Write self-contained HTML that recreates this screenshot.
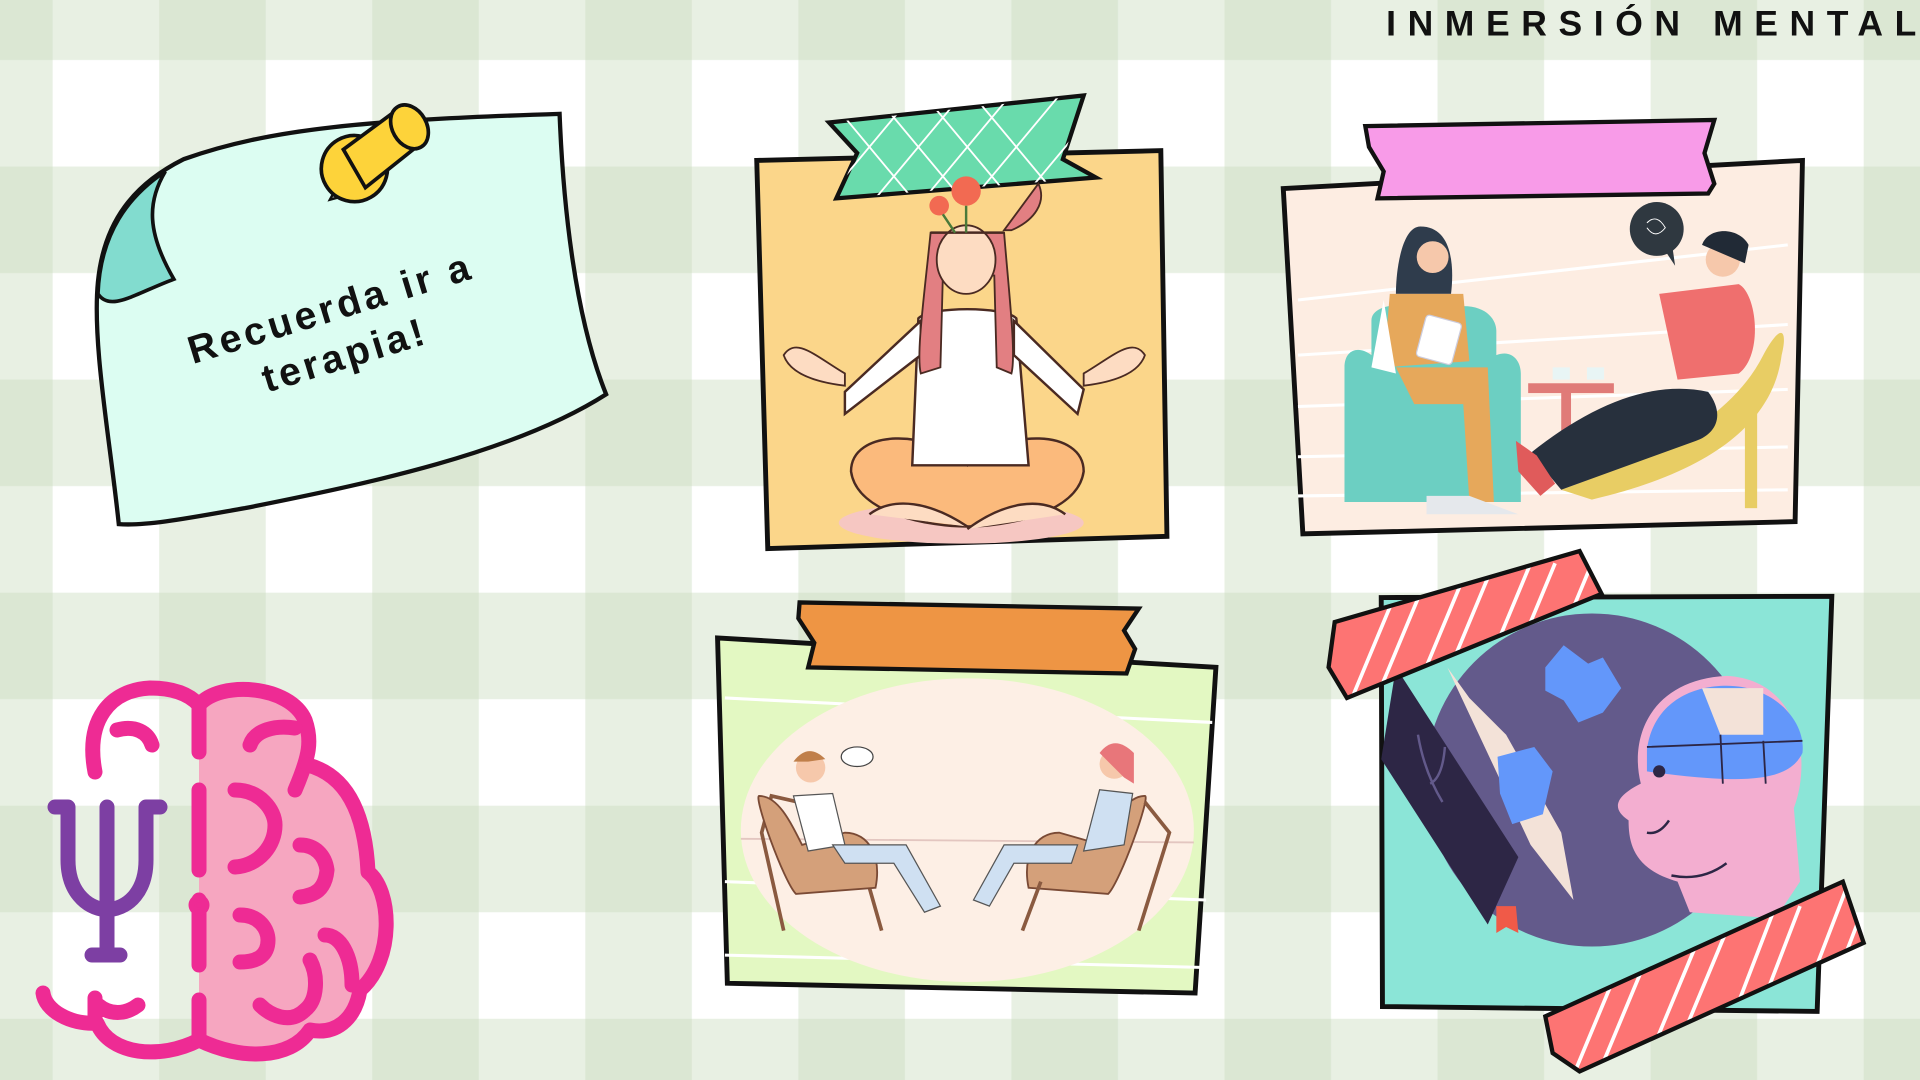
<!DOCTYPE html>
<html><head><meta charset="utf-8"><style>
html,body{margin:0;padding:0;width:1920px;height:1080px;overflow:hidden;background:#fff}
svg{display:block}
</style></head><body>
<svg width="1920" height="1080" viewBox="0 0 1568 882" preserveAspectRatio="none" xmlns="http://www.w3.org/2000/svg">
<defs>
<pattern id="g" x="-44" y="-38" width="174" height="174" patternUnits="userSpaceOnUse">
<rect width="174" height="174" fill="#fff"/>
<rect x="0" y="0" width="87" height="174" fill="#c9dcbd" fill-opacity="0.42"/>
<rect x="0" y="0" width="174" height="87" fill="#c9dcbd" fill-opacity="0.42"/>
</pattern>
<clipPath id="t1"><path d="M677,100 L885,78 L868,130 L895,145 L683,162 L700,125Z"/></clipPath>
<clipPath id="ct"><path d="M1090,508 L1290,450 L1308,485 L1100,570 L1085,545Z"/></clipPath>
<clipPath id="cb"><path d="M1262,830 L1505,720 L1522,770 L1290,875 L1268,860Z"/></clipPath>
</defs>
<rect width="1568" height="882" fill="url(#g)"/>

<text x="1132" y="29" font-family="Liberation Sans, sans-serif" font-weight="bold" font-size="29" textLength="433" lengthAdjust="spacing" fill="#111">INMERSIÓN MENTAL</text>

<!-- sticky note -->
<path d="M97,428 C90,360 75,280 80,230 C85,180 110,150 150,130 C220,105 300,98 457,93 C460,170 470,260 495,322 C420,370 300,395 200,415 C160,422 120,430 97,428Z" fill="#dcfdf2" stroke="#111" stroke-width="3.5"/>
<path d="M80,240 C82,190 105,160 135,140 C120,165 120,190 142,228 C110,240 90,255 80,240Z" fill="#82dccf" stroke="#111" stroke-width="3"/>
<g transform="translate(300,120) rotate(-30)">
<path d="M-48,22 L-38,16 L-33,26Z" fill="#ddd" stroke="#111" stroke-width="2"/>
<circle cx="-18" cy="10" r="27" fill="#fdd33a" stroke="#111" stroke-width="3"/>
<path d="M-18,-8 L35,-14 L35,20 L-18,28Z" fill="#fdd33a" stroke="#111" stroke-width="3"/>
<ellipse cx="38" cy="3" rx="14" ry="19" fill="#fdd33a" stroke="#111" stroke-width="3"/>
</g>
<g transform="translate(273,262) rotate(-17)" font-family="Liberation Sans, sans-serif" font-weight="bold" font-size="32" fill="#111" text-anchor="middle" letter-spacing="3">
<text x="0" y="0">Recuerda ir a</text><text x="0" y="40">terapia!</text></g>

<!-- yoga frame -->
<path d="M618,131 L948,123 L953,438 L627,448Z" fill="#fbd68a" stroke="#111" stroke-width="4"/>
<path d="M677,100 L885,78 L868,130 L895,145 L683,162 L700,125Z" fill="#69dbac" stroke="#111" stroke-width="3.5"/>
<g clip-path="url(#t1)" stroke="#fff" stroke-width="1.5" fill="none">
<path d="M660,180 L760,60 M700,180 L800,60 M740,180 L840,60 M780,180 L880,60 M820,180 L920,60 M700,60 L800,180 M740,60 L840,180 M780,60 L880,180 M660,60 L760,180"/></g>
<ellipse cx="785" cy="427" rx="100" ry="17" fill="#f6c7c2"/>
<path d="M695,385 C695,350 760,350 790,380 C820,350 885,350 885,385 C880,420 820,430 790,430 C760,430 700,420 695,385Z" fill="#fbba7c" stroke="#4a2a22" stroke-width="2"/>
<path d="M750,260 C760,250 820,250 830,260 L840,380 L745,380Z" fill="#fff" stroke="#4a2a22" stroke-width="2"/>
<path d="M752,262 L690,320 L690,338 L752,290Z M828,262 L885,318 L880,338 L828,290Z" fill="#fff" stroke="#4a2a22" stroke-width="2"/>
<path d="M760,190 C755,240 748,290 752,305 L768,300 L770,225 L812,225 L814,300 L826,305 C830,290 824,240 820,190Z" fill="#e27f82" stroke="#4a2a22" stroke-width="1.5"/>
<ellipse cx="789" cy="212" rx="24" ry="28" fill="#fddcc2" stroke="#4a2a22" stroke-width="1.5"/>
<path d="M760,190 L820,190" stroke="#4a2a22" stroke-width="2"/>
<path d="M820,188 L848,150 C855,165 845,180 826,188Z" fill="#e27f82" stroke="#4a2a22" stroke-width="1.5"/>
<circle cx="789" cy="156" r="12" fill="#f26a52"/><circle cx="767" cy="168" r="8" fill="#f26a52"/>
<path d="M789,168 L789,190 M770,175 L780,190" stroke="#4a7a3a" stroke-width="2"/>
<path d="M640,290 C650,275 665,290 690,305 L690,315 C665,312 645,305 640,290Z M935,290 C925,275 910,290 885,305 L885,315 C910,312 930,305 935,290Z" fill="#fddcc2" stroke="#4a2a22" stroke-width="1.5"/>
<path d="M710,420 C730,405 760,410 790,430 M870,420 C850,405 820,410 790,432" stroke="#4a2a22" stroke-width="2" fill="#fddcc2"/>

<!-- therapy frame -->
<path d="M1048,154 L1472,131 L1466,426 L1064,436Z" fill="#fdede2" stroke="#111" stroke-width="4"/>
<g stroke="#fff" stroke-width="2.5"><path d="M1060,245 L1460,200 M1060,290 L1460,265 M1060,332 L1460,318 M1060,373 L1460,365 M1060,405 L1460,400"/></g>
<path d="M1115,103 L1400,98 L1392,125 L1400,150 L1395,158 L1125,162 L1130,140 L1118,120Z" fill="#f89be8" stroke="#111" stroke-width="3.5"/>
<path d="M1098,410 L1098,300 C1098,285 1110,282 1120,290 L1120,262 C1120,250 1140,248 1150,250 L1195,250 C1215,250 1222,262 1222,270 L1222,290 C1235,285 1242,295 1242,305 L1242,410Z" fill="#6ccfc2"/>
<path d="M1160,185 C1145,185 1140,220 1140,240 L1185,240 C1188,215 1185,185 1160,185Z" fill="#2f3c4c"/>
<circle cx="1170" cy="210" r="13" fill="#f6c8ab"/>
<path d="M1135,240 L1195,240 L1200,295 L1130,300Z" fill="#e6a85b"/>
<path d="M1130,245 L1120,300 L1140,305 Z" fill="#fff"/>
<path d="M1140,300 L1215,300 L1220,410 L1200,410 L1195,330 L1155,330Z" fill="#e6a85b"/>
<rect x="1160" y="260" width="30" height="35" rx="3" fill="#fff" stroke="#ccd" transform="rotate(15 1175 278)"/>
<path d="M1165,405 L1200,405 L1240,420 L1165,420Z" fill="#e5e8ec"/>
<rect x="1248" y="313" width="70" height="8" fill="#e07b78"/><rect x="1275" y="320" width="8" height="40" fill="#e07b78"/>
<path d="M1268,300 h14 v10 h-14z M1296,300 h14 v10 h-14z" fill="#e8f5f5"/>
<path d="M1275,400 C1330,380 1410,350 1440,290 C1455,262 1460,270 1455,290 C1450,330 1420,380 1300,408Z" fill="#e8cd64"/>
<rect x="1425" y="330" width="10" height="85" fill="#e8cd64"/>
<path d="M1355,240 L1420,232 C1435,240 1440,290 1420,305 L1370,310Z" fill="#ef6f6e"/>
<path d="M1250,370 C1300,330 1350,310 1395,320 C1410,340 1400,355 1385,360 L1275,400Z" fill="#27303d"/>
<path d="M1238,360 L1255,372 L1270,395 L1258,405 L1240,385Z" fill="#e05b5b"/>
<circle cx="1407" cy="212" r="14" fill="#f6c8ab"/>
<path d="M1390,200 C1395,185 1420,185 1428,200 L1425,215 Z" fill="#212a36"/>
<circle cx="1353" cy="187" r="22" fill="#2f3840"/><path d="M1360,205 l8,12 l-2,-14z" fill="#2f3840"/>
<path d="M1345,182 q8,-8 15,4 q-8,10 -15,0" stroke="#fff" stroke-width="0.8" fill="none"/>

<!-- lower middle frame -->
<path d="M586,521 L993,545 L976,811 L594,803Z" fill="#e3f8c2" stroke="#111" stroke-width="4"/>
<g stroke="#fff" stroke-width="2.5"><path d="M592,570 L990,590 M592,720 L985,735 M592,780 L980,790"/></g>
<ellipse cx="790" cy="678" rx="185" ry="124" fill="#fdefe5"/>
<path d="M605,685 L975,688" stroke="#e3c6c0" stroke-width="1.5"/>
<path d="M652,655 L630,650 L622,680 L640,760 M700,690 L720,760" stroke="#8a5a40" stroke-width="3" fill="none"/>
<path d="M620,650 C615,650 640,720 650,730 L715,725 C720,700 710,680 690,680 L655,690 C645,670 635,650 620,650Z" fill="#d4a07a" stroke="#7a4a35" stroke-width="1.5"/>
<path d="M648,650 L680,648 L690,690 L660,695Z" fill="#fff" stroke="#555" stroke-width="1"/>
<circle cx="662" cy="627" r="12" fill="#f6c8ab"/><path d="M648,622 q12,-16 26,-2 l-14,2z" fill="#c07f4a"/>
<path d="M680,690 L740,690 L768,740 L755,745 L730,705 L690,705Z" fill="#cfe0f2" stroke="#555" stroke-width="1"/>
<ellipse cx="700" cy="618" rx="13" ry="8" fill="#fff" stroke="#444" stroke-width="1"/>
<path d="M935,650 C940,650 915,720 905,730 L840,725 C835,700 845,680 865,680 L900,690 C910,670 920,650 935,650Z" fill="#d4a07a" stroke="#7a4a35" stroke-width="1.5"/>
<path d="M935,655 L955,680 L930,760 M850,720 L835,760" stroke="#8a5a40" stroke-width="3" fill="none"/>
<path d="M898,645 L925,648 L918,690 L885,695Z" fill="#cfe0f2" stroke="#555" stroke-width="1"/>
<circle cx="910" cy="624" r="12" fill="#f6c8ab"/><path d="M898,615 q12,-16 28,0 l0,25 l-8,-5z" fill="#e8767a"/>
<path d="M880,690 L820,690 L795,735 L808,740 L828,705 L875,705Z" fill="#cfe0f2" stroke="#555" stroke-width="1"/>
<path d="M653,492 L930,497 L918,515 L927,530 L920,550 L660,545 L665,525 L652,505Z" fill="#ee9544" stroke="#111" stroke-width="3.5"/>

<!-- lower right frame -->
<path d="M1128,488 L1496,487 L1484,826 L1129,822Z" fill="#8be5d7" stroke="#111" stroke-width="4"/>
<circle cx="1300" cy="637" r="136" fill="#635a8b"/>
<path d="M1182,545 L1250,690 L1285,735 L1275,680 L1230,600 L1200,570 Z" fill="#f3e2d8"/>
<path d="M1140,545 L1128,620 L1215,755 L1240,700 Z" fill="#2d2645"/>
<path d="M1158,600 q5,30 20,55 M1168,640 q10,-5 12,-30" stroke="#635a8b" stroke-width="2" fill="none"/>
<path d="M1222,740 L1238,740 L1240,762 L1230,757 L1222,762Z" fill="#f05a48"/>
<path d="M1262,545 l15,-18 l20,15 l12,-5 l15,25 l-15,20 l-20,8 l-12,-18 l-15,-8z" fill="#6397fa"/>
<path d="M1223,618 l30,-8 l15,20 l-8,35 l-25,8 l-10,-25z" fill="#6397fa"/>
<path d="M1340,640 C1330,600 1350,555 1410,552 C1470,555 1480,620 1465,660 L1470,720 L1450,750 L1380,745 L1370,720 C1335,710 1330,690 1330,670 C1315,660 1320,650 1340,640Z" fill="#f3aed0"/>
<path d="M1345,612 C1350,575 1380,560 1410,560 C1450,560 1475,590 1472,615 C1460,640 1420,640 1345,630Z" fill="#6397fa"/>
<path d="M1390,562 L1440,562 L1440,600 L1405,600 Z" fill="#f3e2d8"/>
<path d="M1345,610 L1472,605 M1405,600 L1407,640 M1440,605 L1442,640" stroke="#2d2645" stroke-width="1.5"/>
<circle cx="1355" cy="630" r="5" fill="#2d2645"/>
<path d="M1345,680 q10,2 18,-10 M1365,715 q25,5 45,-10" stroke="#2d2645" stroke-width="2" fill="none"/>
<path d="M1090,508 L1290,450 L1308,485 L1100,570 L1085,545Z" fill="#fd7473"/>
<g clip-path="url(#ct)" stroke="#fff" stroke-width="3"><path d="M1100,580 L1150,460 M1120,580 L1170,460 M1150,580 L1200,460 M1170,580 L1220,460 M1200,580 L1250,460 M1220,580 L1270,460 M1250,580 L1300,460 M1270,580 L1320,450"/></g>
<path d="M1090,508 L1290,450 L1308,485 L1100,570 L1085,545Z" fill="none" stroke="#111" stroke-width="3.5"/>
<path d="M1262,830 L1505,720 L1522,770 L1290,875 L1268,860Z" fill="#fd7473"/>
<g clip-path="url(#cb)" stroke="#fff" stroke-width="3"><path d="M1280,890 L1330,770 M1300,890 L1350,770 M1340,880 L1390,760 M1360,880 L1410,760 M1400,870 L1450,740 M1420,870 L1470,740 M1460,850 L1510,720 M1480,850 L1530,720"/></g>
<path d="M1262,830 L1505,720 L1522,770 L1290,875 L1268,860Z" fill="none" stroke="#111" stroke-width="3.5"/>

<!-- brain (1920 coords) -->
<g transform="scale(0.8167)" fill="none" stroke="#ee2b94" stroke-width="15" stroke-linecap="round" stroke-linejoin="round">
<path d="M199,700 C230,680 290,685 305,720 C312,740 310,755 308,765 C345,775 365,810 368,872 C392,890 395,960 360,990 C355,1020 335,1035 310,1030 C290,1060 240,1060 199,1040 Z" fill="#f6a6c0" stroke="none"/>
<path d="M95,772 C85,720 110,690 150,688 C175,688 190,695 199,705 C220,680 290,685 305,720 C312,740 310,755 295,790"/>
<path d="M308,765 C345,775 365,810 368,872 C392,890 395,960 360,990 C355,1020 335,1035 310,1030 C290,1060 240,1060 199,1040 C160,1060 110,1055 97,1023 C70,1025 45,1010 43,993"/>
<path d="M117,730 C135,725 148,732 152,745 M199,705 V752 M199,790 V870 M199,900 V965 M199,1000 V1040 M250,745 C255,730 275,725 295,728"/>
<path d="M235,790 C260,790 275,810 275,825 C275,845 260,865 235,867 M300,845 C315,845 325,855 327,870 C325,890 315,895 300,897 M240,915 C260,915 268,930 268,940 C268,955 258,962 240,962 M325,935 C340,935 352,955 352,985 M310,960 C318,975 318,1000 305,1010 C290,1025 270,1015 260,1005 M95,1023 C95,1005 95,1000 95,998 M98,1005 C110,1015 125,1015 138,1005"/>
<circle cx="199" cy="905" r="3" fill="#ee2b94"/>
</g>
<g transform="scale(0.8167)" fill="none" stroke="#7d3fa3" stroke-width="15" stroke-linecap="round" stroke-linejoin="round">
<path d="M55,807 H68 V860 C68,890 85,908 107,910 C130,908 146,890 146,860 V807 H160 M107,807 V955 M92,955 H120"/>
</g>
</svg>
</body></html>
